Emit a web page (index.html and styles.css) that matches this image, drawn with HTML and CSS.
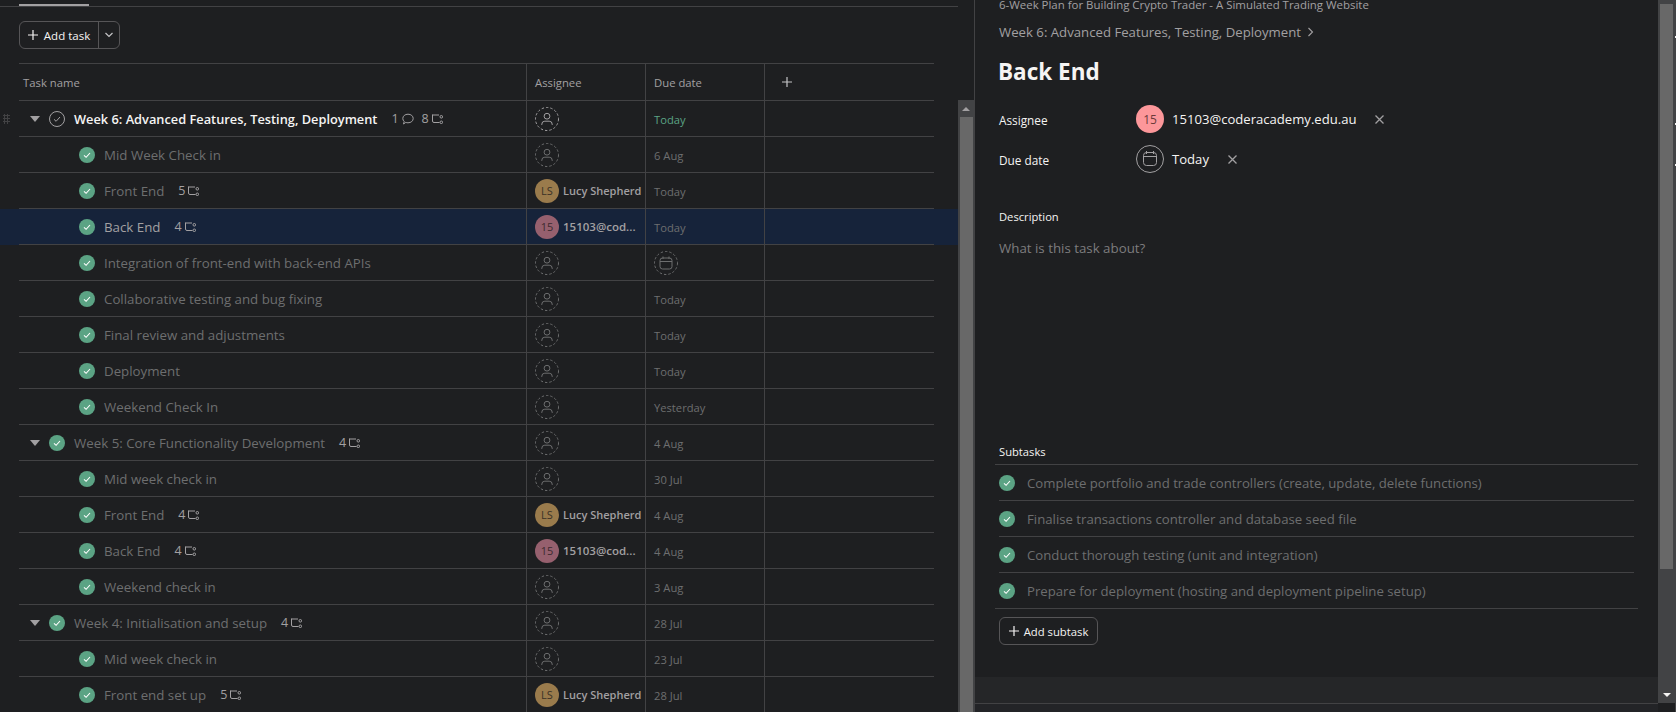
FILE: index.html
```html
<!DOCTYPE html>
<html lang="en">
<head>
    <meta charset="UTF-8">
    <title>Crypto Trader plan</title>
    <link rel="stylesheet" href="styles.css">
</head>
<body>
<svg class="defs" width="0" height="0">
    <symbol id="i-check" viewBox="0 0 16 16"><circle cx="8" cy="8" r="8" fill="#5ba384"/><path d="M5 8.300l2.100 2L11 6" fill="none" stroke="#fff" stroke-width="1.100"/></symbol>
    <symbol id="i-open" viewBox="0 0 16 16"><circle cx="8" cy="8" r="7.500" fill="none" stroke="#a2a0a2" stroke-width="1"/><path d="M5 8.300l2.100 2L11 6" fill="none" stroke="#a2a0a2" stroke-width="1"/></symbol>
    <symbol id="i-sub" viewBox="0 0 11 10"><path d="M.5 1h6.500M.5 .5v6.500a1.500 1.500 0 0 0 1.500 1.500h5.500" fill="none" stroke="currentColor" stroke-width="1"/><circle cx="9.300" cy="2.800" r="1.300" fill="none" stroke="currentColor"/><circle cx="9.300" cy="8.300" r="1.300" fill="none" stroke="currentColor"/></symbol>
    <symbol id="i-user" viewBox="0 0 24 24"><circle cx="12" cy="12" r="11.500" fill="none" stroke="currentColor" stroke-dasharray="2.400 2"/><circle cx="12" cy="9.200" r="2.900" fill="none" stroke="currentColor"/><path d="M6.800 18v-.8a3 3 0 0 1 3-3h4.400a3 3 0 0 1 3 3v.8" fill="none" stroke="currentColor"/></symbol>
    <symbol id="i-cal" viewBox="0 0 24 24"><circle cx="12" cy="12" r="11.500" fill="none" stroke="currentColor" stroke-dasharray="2.400 2"/><rect x="6" y="7" width="12" height="11" rx="2.500" fill="none" stroke="currentColor"/><path d="M6 10.500h12M9 5.500V8M15 5.500V8" fill="none" stroke="currentColor"/></symbol>
    <symbol id="i-caret" viewBox="0 0 10 6"><path d="M0 0h10L5 6z" fill="currentColor"/></symbol>
    <symbol id="i-plus" viewBox="0 0 10 10"><path d="M5 0v10M0 5h10" fill="none" stroke="currentColor" stroke-width="1.200"/></symbol>
    <symbol id="i-x" viewBox="0 0 9 9"><path d="M.5 .5l8 8M8.500 .5l-8 8" fill="none" stroke="currentColor" stroke-width="1.300"/></symbol>
</svg>

<div class="app">
    <main class="list">
        <div class="tabs"><span class="tab-active"></span></div>
        <div class="toolbar">
            <div class="add-task">
                <span class="add-main"><svg class="plus"><use href="#i-plus"/></svg>Add task</span>
                <span class="add-more"><svg width="10" height="6" viewBox="0 0 10 6"><path d="M1.500 1l3.500 3.500L8.500 1" fill="none" stroke="#c4c4c6" stroke-width="1.200"/></svg></span>
            </div>
        </div>

        <div class="row head">
            <div class="cell name">Task name</div>
            <div class="cell">Assignee</div>
            <div class="cell">Due date</div>
            <div class="cell add-col"><svg class="plus"><use href="#i-plus"/></svg></div>
        </div>

        <div class="row parent open">
            <span class="grip"></span>
            <div class="cell name"><svg class="caret"><use href="#i-caret"/></svg><svg class="tick"><use href="#i-open"/></svg><span class="title">Week 6: Advanced Features, Testing, Deployment</span><span class="meta">1 <svg class="bubble" viewBox="0 0 12 12"><path d="M6 1.200c3 0 5.200 1.800 5.200 4.300S9 9.800 6 9.800c-.8 0-1.500-.1-2.200-.4L1.500 11l.7-2.500C1.300 7.700.8 6.700.8 5.500.8 3 3 1.200 6 1.200z" fill="none" stroke="currentColor"/></svg></span><span class="meta">8 <svg class="sub"><use href="#i-sub"/></svg></span></div>
            <div class="cell"><svg class="person"><use href="#i-user"/></svg></div>
            <div class="cell date today">Today</div>
            <div class="cell"></div>
        </div>

        <div class="row">
            <div class="cell name child"><svg class="tick"><use href="#i-check"/></svg><span class="title">Mid Week Check in</span></div>
            <div class="cell"><svg class="person"><use href="#i-user"/></svg></div>
            <div class="cell date">6 Aug</div>
            <div class="cell"></div>
        </div>
        <div class="row">
            <div class="cell name child"><svg class="tick"><use href="#i-check"/></svg><span class="title">Front End</span><span class="meta">5 <svg class="sub"><use href="#i-sub"/></svg></span></div>
            <div class="cell"><span class="avatar ls">LS</span><span class="who">Lucy Shepherd</span></div>
            <div class="cell date">Today</div>
            <div class="cell"></div>
        </div>
        <div class="row selected">
            <div class="cell name child"><svg class="tick"><use href="#i-check"/></svg><span class="title">Back End</span><span class="meta">4 <svg class="sub"><use href="#i-sub"/></svg></span></div>
            <div class="cell"><span class="avatar me">15</span><span class="who mail">15103@cod...</span></div>
            <div class="cell date">Today</div>
            <div class="cell"></div>
        </div>
        <div class="row">
            <div class="cell name child"><svg class="tick"><use href="#i-check"/></svg><span class="title">Integration of front-end with back-end APIs</span></div>
            <div class="cell"><svg class="person"><use href="#i-user"/></svg></div>
            <div class="cell date"><svg class="person"><use href="#i-cal"/></svg></div>
            <div class="cell"></div>
        </div>
        <div class="row">
            <div class="cell name child"><svg class="tick"><use href="#i-check"/></svg><span class="title">Collaborative testing and bug fixing</span></div>
            <div class="cell"><svg class="person"><use href="#i-user"/></svg></div>
            <div class="cell date">Today</div>
            <div class="cell"></div>
        </div>
        <div class="row">
            <div class="cell name child"><svg class="tick"><use href="#i-check"/></svg><span class="title">Final review and adjustments</span></div>
            <div class="cell"><svg class="person"><use href="#i-user"/></svg></div>
            <div class="cell date">Today</div>
            <div class="cell"></div>
        </div>
        <div class="row">
            <div class="cell name child"><svg class="tick"><use href="#i-check"/></svg><span class="title">Deployment</span></div>
            <div class="cell"><svg class="person"><use href="#i-user"/></svg></div>
            <div class="cell date">Today</div>
            <div class="cell"></div>
        </div>
        <div class="row">
            <div class="cell name child"><svg class="tick"><use href="#i-check"/></svg><span class="title">Weekend Check In</span></div>
            <div class="cell"><svg class="person"><use href="#i-user"/></svg></div>
            <div class="cell date">Yesterday</div>
            <div class="cell"></div>
        </div>

        <div class="row parent">
            <div class="cell name"><svg class="caret"><use href="#i-caret"/></svg><svg class="tick"><use href="#i-check"/></svg><span class="title">Week 5: Core Functionality Development</span><span class="meta">4 <svg class="sub"><use href="#i-sub"/></svg></span></div>
            <div class="cell"><svg class="person"><use href="#i-user"/></svg></div>
            <div class="cell date">4 Aug</div>
            <div class="cell"></div>
        </div>
        <div class="row">
            <div class="cell name child"><svg class="tick"><use href="#i-check"/></svg><span class="title">Mid week check in</span></div>
            <div class="cell"><svg class="person"><use href="#i-user"/></svg></div>
            <div class="cell date">30 Jul</div>
            <div class="cell"></div>
        </div>
        <div class="row">
            <div class="cell name child"><svg class="tick"><use href="#i-check"/></svg><span class="title">Front End</span><span class="meta">4 <svg class="sub"><use href="#i-sub"/></svg></span></div>
            <div class="cell"><span class="avatar ls">LS</span><span class="who">Lucy Shepherd</span></div>
            <div class="cell date">4 Aug</div>
            <div class="cell"></div>
        </div>
        <div class="row">
            <div class="cell name child"><svg class="tick"><use href="#i-check"/></svg><span class="title">Back End</span><span class="meta">4 <svg class="sub"><use href="#i-sub"/></svg></span></div>
            <div class="cell"><span class="avatar me">15</span><span class="who mail">15103@cod...</span></div>
            <div class="cell date">4 Aug</div>
            <div class="cell"></div>
        </div>
        <div class="row">
            <div class="cell name child"><svg class="tick"><use href="#i-check"/></svg><span class="title">Weekend check in</span></div>
            <div class="cell"><svg class="person"><use href="#i-user"/></svg></div>
            <div class="cell date">3 Aug</div>
            <div class="cell"></div>
        </div>

        <div class="row parent">
            <div class="cell name"><svg class="caret"><use href="#i-caret"/></svg><svg class="tick"><use href="#i-check"/></svg><span class="title">Week 4: Initialisation and setup</span><span class="meta">4 <svg class="sub"><use href="#i-sub"/></svg></span></div>
            <div class="cell"><svg class="person"><use href="#i-user"/></svg></div>
            <div class="cell date">28 Jul</div>
            <div class="cell"></div>
        </div>
        <div class="row">
            <div class="cell name child"><svg class="tick"><use href="#i-check"/></svg><span class="title">Mid week check in</span></div>
            <div class="cell"><svg class="person"><use href="#i-user"/></svg></div>
            <div class="cell date">23 Jul</div>
            <div class="cell"></div>
        </div>
        <div class="row">
            <div class="cell name child"><svg class="tick"><use href="#i-check"/></svg><span class="title">Front end set up</span><span class="meta">5 <svg class="sub"><use href="#i-sub"/></svg></span></div>
            <div class="cell"><span class="avatar ls">LS</span><span class="who">Lucy Shepherd</span></div>
            <div class="cell date">28 Jul</div>
            <div class="cell"></div>
        </div>
    </main>

    <div class="scroll list-scroll">
        <div class="arrow"><i class="up"></i></div>
        <div class="thumb"></div>
    </div>

    <aside class="detail">
        <div class="detail-body">
            <div class="project">6-Week Plan for Building Crypto Trader - A Simulated Trading Website</div>
            <div class="crumb">Week 6: Advanced Features, Testing, Deployment <svg width="7" height="10" viewBox="0 0 7 10"><path d="M1.500 1l4 4-4 4" fill="none" stroke="#a2a0a2" stroke-width="1.100"/></svg></div>
            <h1>Back End</h1>
            <div class="field">
                <div class="field-label">Assignee</div>
                <span class="avatar big">15</span>
                <span class="field-value">15103@coderacademy.edu.au</span>
                <svg class="clear"><use href="#i-x"/></svg>
            </div>
            <div class="field">
                <div class="field-label">Due date</div>
                <svg class="big-cal" viewBox="0 0 28 28"><circle cx="14" cy="14" r="13.500" fill="none" stroke="#a2a0a2"/><rect x="7.500" y="7.500" width="13" height="13" rx="3" fill="none" stroke="#a2a0a2"/><path d="M7.500 11.500h13M10.500 6v3M17.500 6v3" fill="none" stroke="#a2a0a2"/></svg>
                <span class="field-value">Today</span>
                <svg class="clear"><use href="#i-x"/></svg>
            </div>
            <div class="section-label">Description</div>
            <div class="placeholder">What is this task about?</div>
            <div class="section-label subtasks-label">Subtasks</div>
            <ul class="subtasks">
                <li><svg class="tick"><use href="#i-check"/></svg>Complete portfolio and trade controllers (create, update, delete functions)</li>
                <li><svg class="tick"><use href="#i-check"/></svg>Finalise transactions controller and database seed file</li>
                <li><svg class="tick"><use href="#i-check"/></svg>Conduct thorough testing (unit and integration)</li>
                <li><svg class="tick"><use href="#i-check"/></svg>Prepare for deployment (hosting and deployment pipeline setup)</li>
            </ul>
            <div class="add-subtask"><svg class="plus"><use href="#i-plus"/></svg>Add subtask</div>
        </div>
        <div class="detail-strip"></div>
        <div class="detail-foot"></div>
    </aside>

    <div class="scroll detail-scroll">
        <div class="thumb"></div>
        <div class="arrow down"><i class="dn"></i></div>
    </div>
    <div class="page-edge"></div>
</div>
</body>
</html>
```

FILE: styles.css
```css
* {
    box-sizing: border-box;
}

html, body {
    margin: 0;
    height: 100%;
    overflow: hidden;
}

body {
    background: #1e1f21;
    color: #f5f4f3;
    font-family: "Open Sans", "Noto Sans", sans-serif;
    font-size: 13px;
}

.defs {
    position: absolute;
}

.app {
    display: flex;
    height: 712px;
}

/* task list */
.list {
    width: 958px;
    flex: none;
    overflow: hidden;
}

.tabs {
    height: 7px;
    border-bottom: 1px solid #424244;
    margin-right: -16px;
    padding: 4px 0 0 19px;
}

.tab-active {
    display: block;
    width: 70px;
    height: 2px;
    background: #a2a0a2;
}

.toolbar {
    height: 56px;
    padding: 14px 0 0 19px;
}

.add-task {
    display: inline-flex;
    height: 28px;
    border: 1px solid #565557;
    border-radius: 6px;
    font-size: 11.500px;
}

.add-main {
    width: 78px;
    display: flex;
    align-items: center;
    justify-content: center;
    gap: 6px;
    color: #f5f4f3;
}

.plus {
    width: 10px;
    height: 10px;
    flex: none;
}

.add-more {
    width: 21px;
    display: flex;
    align-items: center;
    justify-content: center;
    border-left: 1px solid #565557;
}

.row {
    display: grid;
    grid-template-columns: 508px 119px 119px 169px;
    height: 36px;
    margin-right: 24px;
    margin-left: 19px;
    border-bottom: 1px solid #424244;
    position: relative;
}

.row.head {
    height: 38px;
    border-top: 1px solid #424244;
    color: #a2a0a2;
    font-size: 11.300px;
}

.row.selected {
    margin: 0;
    padding: 0 24px 0 19px;
    border-bottom: 0;
    background: #16233a;
}

.row.selected .cell {
    border-bottom: 1px solid #424244;
}

.grip {
    position: absolute;
    left: -16px;
    top: 13px;
    width: 7px;
    height: 10px;
    background: radial-gradient(circle, #424244 1px, transparent 1.200px) 0 0 / 3px 3px;
}

.cell {
    display: flex;
    align-items: center;
    padding-left: 8px;
    border-right: 1px solid #424244;
    min-width: 0;
    white-space: nowrap;
}

.cell:last-child {
    border-right: 0;
}

.cell.name {
    padding-left: 4px;
}

.parent .cell.name {
    padding-left: 11px;
}

.cell.name.child {
    padding-left: 60px;
}

.caret {
    width: 10px;
    height: 6px;
    margin-right: 9px;
    color: #a2a0a2;
}

.tick {
    width: 16px;
    height: 16px;
    flex: none;
    margin-right: 9px;
}

.title {
    color: #6d6e6f;
    font-size: 13.300px;
}

.open .title {
    color: #f5f4f3;
    font-size: 12.800px;
    font-weight: 600;
}

.selected .title {
    color: #a2a0a2;
}

.meta {
    display: inline-flex;
    align-items: center;
    gap: 3px;
    margin-left: 14px;
    color: #a2a0a2;
    font-size: 12.500px;
}

.meta + .meta {
    margin-left: 8px;
}

.sub {
    width: 11px;
    height: 10px;
}

.bubble {
    width: 12px;
    height: 12px;
}

.person {
    width: 24px;
    height: 24px;
    color: #6d6e6f;
}

.open .person {
    color: #a2a0a2;
}

.avatar {
    width: 24px;
    height: 24px;
    flex: none;
    border-radius: 50%;
    display: flex;
    align-items: center;
    justify-content: center;
    color: #3a3226;
    font-size: 11px;
}

.avatar.ls {
    background: #9a7b4c;
}

.avatar.me {
    background: #96606e;
    color: #3c2a2e;
}

.who {
    margin-left: 4px;
    color: #a2a0a2;
    font-size: 11px;
    font-weight: 600;
}

.who.mail {
    font-size: 11.500px;
}

.date {
    padding-top: 1px;
    color: #6d6e6f;
    font-size: 11.200px;
}

.date.today {
    color: #5ba384;
}

.add-col .plus {
    margin-left: 9px;
    color: #c4c4c6;
}

/* scrollbars */
.scroll {
    width: 16px;
    flex: none;
    display: flex;
    flex-direction: column;
    background: #424345;
}

.list-scroll {
    margin-top: 100px;
}

.thumb {
    flex: 1;
    margin: 0 1px 0 2px;
    background: #686868;
}

.arrow {
    height: 17px;
    flex: none;
    display: flex;
    align-items: center;
    justify-content: center;
}

.arrow i {
    width: 0;
    height: 0;
    border-left: 4px solid transparent;
    border-right: 4px solid transparent;
}

.arrow .up {
    border-bottom: 4px solid #a2a0a2;
}

.arrow .dn {
    border-top: 4px solid #f5f4f3;
}

/* detail pane */
.detail {
    width: 684px;
    flex: none;
    border-left: 1px solid #424244;
    display: flex;
    flex-direction: column;
}

.detail-body {
    height: 677px;
    padding-left: 24px;
    overflow: hidden;
}

.project {
    margin-top: -4px;
    color: #a2a0a2;
    font-size: 11.450px;
    line-height: 18px;
}

.crumb {
    margin-top: 8px;
    color: #a2a0a2;
    font-size: 13.200px;
    line-height: 20px;
    display: flex;
    align-items: center;
    gap: 6px;
}

h1 {
    margin: 14px 0 17px -1px;
    font-size: 22.500px;
    line-height: 32px;
    font-weight: 700;
}

.field {
    display: flex;
    align-items: center;
    height: 28px;
    margin-bottom: 12px;
}

.field-label {
    width: 137px;
    font-size: 11.800px;
    padding-top: 2px;
}

.avatar.big {
    width: 28px;
    height: 28px;
    background: #fc979a;
    color: #6b3a3a;
    font-size: 12px;
}

.big-cal {
    width: 28px;
    height: 28px;
}

.field-value {
    margin-left: 8px;
    font-size: 13.100px;
    font-weight: 500;
}

.clear {
    width: 9px;
    height: 9px;
    margin-left: 19px;
    color: #a2a0a2;
}

.section-label {
    font-size: 11.200px;
    line-height: 18px;
}

.field + .section-label {
    margin-top: 35px;
}

.placeholder {
    margin-top: 11px;
    color: #7d7c7e;
    font-size: 13.300px;
    line-height: 22px;
}

.subtasks-label {
    margin-top: 184px;
}

.subtasks {
    list-style: none;
    width: 643px;
    margin: 3px 0 0 -4px;
    padding: 0;
    border-top: 1px solid #424244;
    border-bottom: 1px solid #424244;
}

.subtasks li {
    height: 36px;
    margin: 0 4px;
    display: flex;
    align-items: center;
    color: #6d6e6f;
    font-size: 13.200px;
    border-bottom: 1px solid #424244;
}

.subtasks li:last-child {
    height: 35px;
    border-bottom: 0;
}

.subtasks .tick {
    margin-right: 12px;
}

.add-subtask {
    width: 99px;
    height: 28px;
    margin-top: 8px;
    border: 1px solid #565557;
    border-radius: 6px;
    display: flex;
    align-items: center;
    justify-content: center;
    gap: 5px;
    font-size: 11.300px;
}

.detail-strip {
    height: 26px;
    background: #252628;
}

.detail-foot {
    flex: 1;
    border-top: 1px solid #424244;
    background: #232427;
}

.detail-scroll {
    width: 17px;
    height: 703px;
}

.detail-scroll .thumb {
    flex: none;
    height: 565px;
    margin: 4px 2px 0;
}

.detail-scroll .arrow.down {
    margin-top: auto;
}

.page-edge {
    width: 1px;
    flex: none;
    background: linear-gradient(#424345 36px, #f5f4f3 36px, #f5f4f3 38px, #424345 38px, #424345 123px, #f5f4f3 123px, #f5f4f3 125px, #424345 125px, #424345 164px, #f5f4f3 164px, #f5f4f3 166px, #424345 166px);
}
```
